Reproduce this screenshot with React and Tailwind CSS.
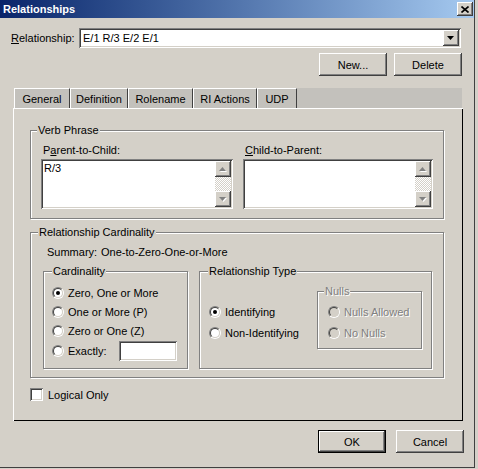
import React from "react";

const RAISED =
  "bg-[#d4d0c8] shadow-[inset_-1px_-1px_#404040,inset_1px_1px_#ffffff,inset_-2px_-2px_#808080,inset_2px_2px_#d4d0c8]";
const SUNKEN =
  "shadow-[inset_1px_1px_#808080,inset_-1px_-1px_#ffffff,inset_2px_2px_#404040,inset_-2px_-2px_#d4d0c8]";

function Btn({ children, def }) {
  return (
    <div
      className={`w-[68px] h-[23px] flex items-center justify-center ${RAISED} ${
        def ? "border border-black" : ""
      }`}
    >
      {children}
    </div>
  );
}

function Group({ label, labelClass, className, children }) {
  return (
    <div
      className={`relative border border-[#808080] shadow-[inset_1px_1px_#ffffff,1px_1px_#ffffff] ${className}`}
    >
      <span className={`absolute top-[-8px] bg-[#d4d0c8] px-[1px] leading-[14px] ${labelClass}`}>
        {label}
      </span>
      {children}
    </div>
  );
}

function Radio({ checked, disabled }) {
  return (
    <span className="w-[12px] h-[12px] shrink-0 rounded-full border border-t-[#808080] border-l-[#808080] border-r-white border-b-white">
      <span
        className={`w-full h-full rounded-full border border-t-[#404040] border-l-[#404040] border-r-[#d4d0c8] border-b-[#d4d0c8] flex items-center justify-center ${
          disabled ? "bg-[#d4d0c8]" : "bg-white"
        }`}
      >
        {checked && <span className="w-[4px] h-[4px] rounded-full bg-black" />}
      </span>
    </span>
  );
}

function RadioRow({ label, checked, disabled, h = "h-[19px]" }) {
  return (
    <div className={`${h} flex items-center gap-[4px]`}>
      <Radio checked={checked} disabled={disabled} />
      <span className={disabled ? "text-[#808080] [text-shadow:1px_1px_#ffffff]" : ""}>
        {label}
      </span>
    </div>
  );
}

function Tri({ up, color = "#808080", shadow }) {
  return (
    <svg width="8" height="5" viewBox="0 0 8 5">
      {shadow && (
        <polygon points={up ? "4.5,1 8,5 1,5" : "1,1 8,1 4.5,5"} fill="#ffffff" />
      )}
      <polygon points={up ? "3.5,0 7,4 0,4" : "0,0 7,0 3.5,4"} fill={color} />
    </svg>
  );
}

function ScrollBtn({ up }) {
  return (
    <div className={`w-[16px] h-[16px] flex items-center justify-center ${RAISED}`}>
      <Tri up={up} shadow />
    </div>
  );
}

function TextBox({ w, text }) {
  return (
    <div className={`${w} h-[50px] bg-white ${SUNKEN} p-[2px] flex`}>
      <div className="flex-1 pl-[1px] leading-[14px]">{text}</div>
      <div className="w-[16px] flex flex-col">
        <ScrollBtn up />
        <div className="flex-1 bg-[repeating-conic-gradient(#d4d0c8_0_25%,#ffffff_0_50%)] bg-[length:2px_2px]" />
        <ScrollBtn />
      </div>
    </div>
  );
}

function Tab({ w, children }) {
  return (
    <div
      className={`${w} h-full flex items-center justify-center border-t border-l border-white border-r border-r-[#404040] pt-[1px]`}
    >
      {children}
    </div>
  );
}

export default function App() {
  return (
    <div className="w-[478px] h-[469px] bg-[#d4d0c8] text-[11px] text-black font-['Liberation_Sans',Arial,sans-serif] leading-[14px]">
      <div className="w-[475px] h-[468px] border-r border-b border-[#404040] flex flex-col">
        {/* title bar */}
        <div className="h-[18px] flex items-center justify-between bg-linear-to-r from-[#0a246a] to-[#a6caf0] pl-[3px] pr-[1px]">
          <span className="text-white font-bold text-[11px]">Relationships</span>
          <div className={`w-[16px] h-[14px] flex items-center justify-center ${RAISED}`}>
            <svg width="8" height="7" viewBox="0 0 8 7">
              <path d="M0.5 0.5 L7.5 6.5 M7.5 0.5 L0.5 6.5" stroke="#000" strokeWidth="1.6" />
            </svg>
          </div>
        </div>

        {/* relationship row */}
        <div className="mt-[10px] h-[20px] flex items-center pl-[11px]">
          <span className="w-[68px]">
            <span className="underline">R</span>elationship:
          </span>
          <div className={`w-[382px] h-[20px] bg-white ${SUNKEN} flex items-center justify-between pl-[4px] pr-[2px]`}>
            <span>E/1 R/3 E/2 E/1</span>
            <div className={`w-[16px] h-[16px] flex items-center justify-center ${RAISED}`}>
              <Tri color="#000000" />
            </div>
          </div>
        </div>

        {/* new / delete */}
        <div className="mt-[5px] flex justify-end gap-[7px] pr-[12px]">
          <Btn>New...</Btn>
          <Btn>Delete</Btn>
        </div>

        {/* tab control */}
        <div className="mt-[12px] ml-[13px] w-[450px] flex flex-col">
          <div className="ml-[1px] w-[448px] h-[20px] bg-[#c3c1bc] flex">
            <Tab w="w-[56px]">General</Tab>
            <Tab w="w-[58px]">Definition</Tab>
            <Tab w="w-[65px]">Rolename</Tab>
            <Tab w="w-[64px]">RI Actions</Tab>
            <Tab w="w-[40px]">UDP</Tab>
          </div>
          <div className="h-[313px] pl-[17px] pt-[22px] flex flex-col shadow-[inset_1px_1px_#ffffff,inset_-1px_-1px_#000000]">
            {/* verb phrase */}
            <Group label="Verb Phrase" labelClass="left-[6px]" className="w-[414px] h-[89px] pt-[12px] pl-[10px]">
              <div className="flex gap-[10px]">
                <div className="flex flex-col">
                  <span className="pl-[2px] h-[14px]">
                    P<span className="underline">a</span>rent-to-Child:
                  </span>
                  <div className="mt-[2px]">
                    <TextBox w="w-[192px]" text="R/3" />
                  </div>
                </div>
                <div className="flex flex-col">
                  <span className="pl-[2px] h-[14px]">
                    <span className="underline">C</span>hild-to-Parent:
                  </span>
                  <div className="mt-[2px]">
                    <TextBox w="w-[190px]" text="" />
                  </div>
                </div>
              </div>
            </Group>

            {/* relationship cardinality */}
            <Group
              label="Relationship Cardinality"
              labelClass="left-[7px]"
              className="mt-[13px] w-[414px] h-[146px] pt-[12px] pl-[12px]"
            >
              <div className="h-[14px] flex ml-[4px]">
                <span className="w-[54px]">Summary:</span>
                <span>One-to-Zero-One-or-More</span>
              </div>
              <div className="mt-[12px] flex gap-[11px]">
                <Group label="Cardinality" labelClass="left-[8px]" className="w-[145px] h-[98px] pt-[11px] pl-[8px]">
                  <RadioRow label="Zero, One or More" checked />
                  <RadioRow label="One or More (P)" />
                  <RadioRow label="Zero or One (Z)" />
                  <div className="h-[21px] flex items-center gap-[4px]">
                    <Radio />
                    <span className="w-[47px]">Exactly:</span>
                    <div className={`w-[58px] h-[20px] bg-white ${SUNKEN}`} />
                  </div>
                </Group>
                <Group label="Relationship Type" labelClass="left-[8px]" className="w-[233px] h-[98px] pl-[9px] flex">
                  <div className="w-[108px] pt-[29px] flex flex-col">
                    <RadioRow label="Identifying" checked h="h-[21px]" />
                    <RadioRow label="Non-Identifying" h="h-[21px]" />
                  </div>
                  <Group
                    label={<span className="text-[#808080] [text-shadow:1px_1px_#ffffff]">Nulls</span>}
                    labelClass="left-[6px]"
                    className="mt-[19px] w-[105px] h-[58px] pt-[9px] pl-[10px]"
                  >
                    <RadioRow label="Nulls Allowed" disabled h="h-[21px]" />
                    <RadioRow label="No Nulls" disabled h="h-[21px]" />
                  </Group>
                </Group>
              </div>
            </Group>

            {/* logical only */}
            <div className="mt-[10px] h-[13px] flex items-center gap-[5px]">
              <div className={`w-[13px] h-[13px] bg-white ${SUNKEN}`} />
              <span>Logical Only</span>
            </div>
          </div>
        </div>

        {/* ok / cancel */}
        <div className="mt-[9px] flex justify-end gap-[10px] pr-[10px]">
          <Btn def>OK</Btn>
          <Btn>Cancel</Btn>
        </div>
      </div>
    </div>
  );
}
